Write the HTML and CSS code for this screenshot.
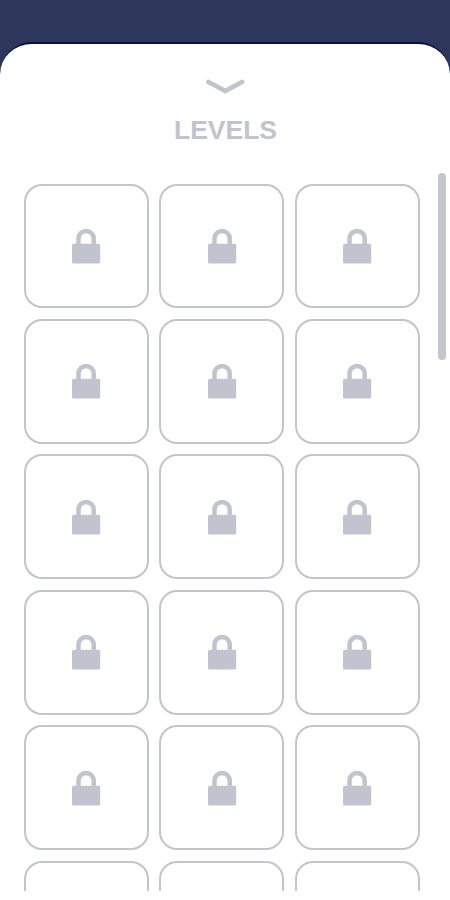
FILE: index.html
```html
<!DOCTYPE html>
<html lang="en">
<head>
    <meta charset="UTF-8">
    <meta name="viewport" content="width=device-width, initial-scale=1.0">
    <title>Levels</title>
    <link rel="stylesheet" href="styles.css">
</head>
<body>
    <div class="sheet">
        <button type="button" class="close" aria-label="Close">
            <svg width="40" height="16" viewBox="0 0 40 16">
                <path d="M3.5 3 L20.3 12 L37 3"/>
            </svg>
        </button>
        <h1>LEVELS</h1>
        <div class="list">
            <div class="levels" id="levels"></div>
            <div class="scrollbar"></div>
        </div>
    </div>

    <script>
        const lock = `
            <svg class="lock" width="30" height="36" viewBox="0 0 30 36">
                <path class="shackle" d="M7.5 17 V10.5 a7.6 7.6 0 0 1 15.2 0 V17"/>
                <rect x="1" y="15.7" width="28.2" height="19.8" rx="1.6"/>
            </svg>
        `;
        const levels = document.getElementById('levels');

        for (let i = 0; i < 18; i++) {
            levels.innerHTML += `<div class="level">${lock}</div>`;
        }
    </script>
</body>
</html>
```

FILE: styles.css
```css
* {
    box-sizing: border-box;
}

body {
    margin: 0;
    height: 100vh;
    padding-top: 42px;
    overflow: hidden;
    background-color: #2d375b;
    font-family: "Liberation Sans", Arial, sans-serif;
}

.sheet {
    height: 858px;
    border-top: 2px solid #0b0c42;
    border-radius: 32px 32px 0 0;
    background: #fff;
    display: flex;
    flex-direction: column;
    align-items: center;
}

.close {
    display: flex;
    margin-top: 35px;
    padding: 0;
    border: none;
    background: none;
}

.close path {
    fill: none;
    stroke: #c1c4ce;
    stroke-width: 4.8;
    stroke-linecap: round;
    stroke-linejoin: round;
}

h1 {
    margin: 20px 0 0 1px;
    font-size: 26.5px;
    line-height: 30px;
    color: #c1c4ce;
}

.list {
    width: 100%;
    height: 718px;
    margin-top: 28px;
    padding: 10.5px 4px 0 24px;
    overflow: hidden;
    display: flex;
    justify-content: space-between;
}

.levels {
    display: grid;
    grid-template-columns: repeat(3, 124.6px);
    grid-auto-rows: 124.6px;
    gap: 10.9px;
}

.level {
    display: flex;
    justify-content: center;
    align-items: center;
    border: 2px solid #c2c4ce;
    border-radius: 18px;
}

.lock {
    fill: #c1c4ce;
}

.lock .shackle {
    fill: none;
    stroke: #c1c4ce;
    stroke-width: 4.5;
}

.scrollbar {
    width: 8px;
    height: 187px;
    margin-top: -10.5px;
    border-radius: 4px;
    background: #c3c6cc;
}
```
